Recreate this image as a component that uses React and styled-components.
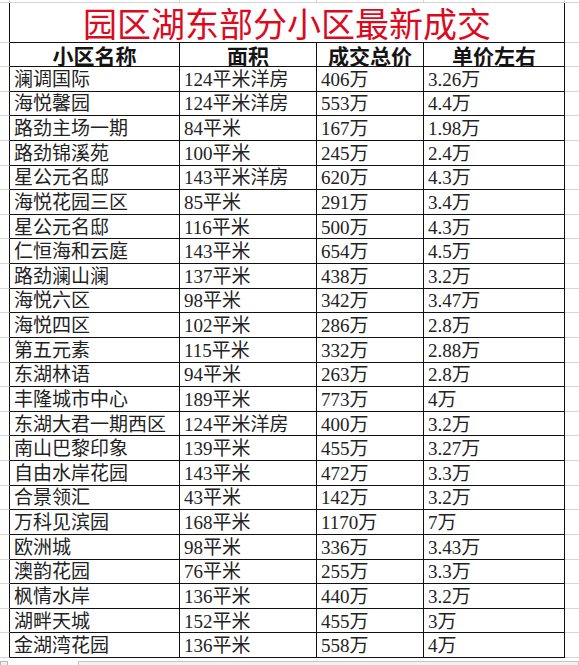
import React from "react";
import styled, { createGlobalStyle } from "styled-components";

const Global = createGlobalStyle`
  html, body { margin: 0; padding: 0; background: #ffffff; overflow: hidden; }
  * { box-sizing: border-box; }
`;

const rows = [
  ["澜调国际", "124平米洋房", "406万", "3.26万"],
  ["海悦馨园", "124平米洋房", "553万", "4.4万"],
  ["路劲主场一期", "84平米", "167万", "1.98万"],
  ["路劲锦溪苑", "100平米", "245万", "2.4万"],
  ["星公元名邸", "143平米洋房", "620万", "4.3万"],
  ["海悦花园三区", "85平米", "291万", "3.4万"],
  ["星公元名邸", "116平米", "500万", "4.3万"],
  ["仁恒海和云庭", "143平米", "654万", "4.5万"],
  ["路劲澜山澜", "137平米", "438万", "3.2万"],
  ["海悦六区", "98平米", "342万", "3.47万"],
  ["海悦四区", "102平米", "286万", "2.8万"],
  ["第五元素", "115平米", "332万", "2.88万"],
  ["东湖林语", "94平米", "263万", "2.8万"],
  ["丰隆城市中心", "189平米", "773万", "4万"],
  ["东湖大君一期西区", "124平米洋房", "400万", "3.2万"],
  ["南山巴黎印象", "139平米", "455万", "3.27万"],
  ["自由水岸花园", "143平米", "472万", "3.3万"],
  ["合景领汇", "43平米", "142万", "3.2万"],
  ["万科见滨园", "168平米", "1170万", "7万"],
  ["欧洲城", "98平米", "336万", "3.43万"],
  ["澳韵花园", "76平米", "255万", "3.3万"],
  ["枫情水岸", "136平米", "440万", "3.2万"],
  ["湖畔天城", "152平米", "455万", "3万"],
  ["金湖湾花园", "136平米", "558万", "4万"],
];

const headers = ["小区名称", "面积", "成交总价", "单价左右"];

const GRID = "#d4d4d4";
const INK = "#111111";

const Sheet = styled.div`
  display: grid;
  grid-template-columns: 10px 170px 137px 107px 141px 1fr;
  grid-template-rows: 3px 40px 24px repeat(24, 24.625px) 1fr;
  width: 579px;
  height: 665px;
  font-family: "Liberation Serif", "Noto Sans CJK SC", serif;
  color: #1a1a1a;
`;

const TopGap = styled.div`
  border-bottom: 1px solid ${GRID};
  border-right: ${(p) => (p.$last ? "none" : `1px solid ${GRID}`)};
`;

const Gutter = styled.div`
  border-bottom: 1px solid ${GRID};
  border-right: ${(p) => (p.$left ? `1px solid ${INK}` : "none")};
`;

const Title = styled.div`
  grid-column: span 4;
  display: flex;
  align-items: center;
  justify-content: center;
  border-right: 1px solid ${INK};
  border-bottom: 1px solid ${INK};
  color: #dc0a1e;
  font-family: "Noto Sans CJK SC", sans-serif;
  font-size: 34px;
  font-weight: 400;
  line-height: 36px;
`;

const Head = styled.div`
  display: flex;
  align-items: center;
  justify-content: center;
  border-right: 1px solid ${INK};
  border-bottom: 1px solid ${INK};
  font-family: "Noto Sans CJK SC", sans-serif;
  font-size: 21px;
  font-weight: 700;
  line-height: 22px;
  color: #141414;
`;

const Cell = styled.div`
  display: flex;
  align-items: center;
  border-right: 1px solid ${INK};
  border-bottom: 1px solid ${INK};
  padding: 1px 0 0 4px;
  font-size: 19px;
  line-height: 21px;
  white-space: nowrap;
  color: #222;
`;

const Footer = styled.div`
  grid-column: 1 / -1;
  display: flex;
  align-items: flex-end;
`;

const TabStub = styled.div`
  width: 8px;
  height: 4px;
  border: 1px solid #b8b8b8;
  border-bottom: none;
  background: #f0f0f0;
`;

const TabSpace = styled.div`
  width: 70px;
  height: 4px;
`;

const ScrollBar = styled.div`
  flex: 1;
  height: 4px;
  border: 1px solid #c4c4c4;
  border-bottom: none;
  background: #f2f2f2;
`;

export default function App() {
  return (
    <>
      <Global />
      <Sheet>
        {[0, 1, 2, 3, 4, 5].map((i) => (
          <TopGap key={`t${i}`} $last={i === 5} />
        ))}

        <Gutter $left />
        <Title>园区湖东部分小区最新成交</Title>
        <Gutter />

        <Gutter $left />
        {headers.map((h) => (
          <Head key={h}>{h}</Head>
        ))}
        <Gutter />

        {rows.map((r, i) => (
          <React.Fragment key={i}>
            <Gutter $left />
            {r.map((v, j) => (
              <Cell key={j}>{v}</Cell>
            ))}
            <Gutter />
          </React.Fragment>
        ))}

        <Footer>
          <TabStub />
          <TabSpace />
          <ScrollBar />
        </Footer>
      </Sheet>
    </>
  );
}
